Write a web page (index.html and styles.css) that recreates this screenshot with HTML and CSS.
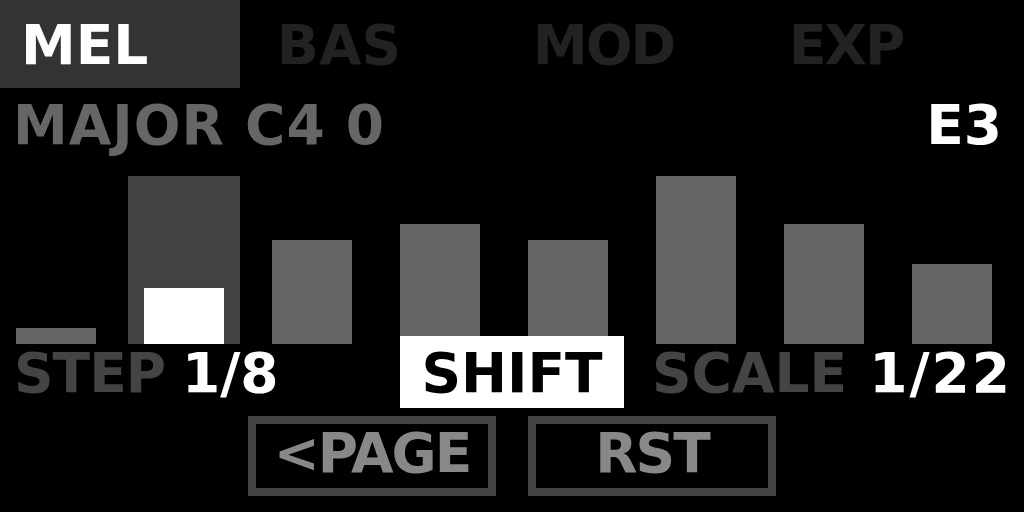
FILE: index.html
```html
<!DOCTYPE html>
<html lang="en">
<head>
    <meta charset="UTF-8">
    <meta name="viewport" content="width=device-width, initial-scale=1.0">
    <title>Sequencer - MEL</title>
    <link rel="stylesheet" href="styles.css">
</head>
<body>
    <div class="screen">
        <div class="tabs">
            <div class="tab active">MEL</div>
            <div class="tab">BAS</div>
            <div class="tab tight">MOD</div>
            <div class="tab tight">EXP</div>
        </div>

        <div class="info">
            <span class="scale-name">MAJOR C4 0</span>
            <span class="note">E3</span>
        </div>

        <div class="bars">
            <div class="slot"><div class="bar" style="height: 16px"></div></div>
            <div class="slot selected">
                <div class="frame"><div class="bar" style="height: 56px"></div></div>
            </div>
            <div class="slot"><div class="bar" style="height: 104px"></div></div>
            <div class="slot"><div class="bar" style="height: 120px"></div></div>
            <div class="slot"><div class="bar" style="height: 104px"></div></div>
            <div class="slot"><div class="bar" style="height: 168px"></div></div>
            <div class="slot"><div class="bar" style="height: 120px"></div></div>
            <div class="slot"><div class="bar" style="height: 80px"></div></div>
        </div>

        <div class="params">
            <div class="param step">
                <span class="label">STEP</span>
                <span class="value">1/8</span>
            </div>
            <div class="shift">SHIFT</div>
            <div class="param scale">
                <span class="label">SCALE</span>
                <span class="value">1/22</span>
            </div>
        </div>

        <div class="buttons">
            <div class="btn page">&lt;PAGE</div>
            <div class="btn rst">RST</div>
        </div>
    </div>
</body>
</html>
```

FILE: styles.css
```css
* {
    margin: 0;
    padding: 0;
    box-sizing: border-box;
}

body {
    background: #000;
}

.screen {
    width: 1024px;
    height: 512px;
    overflow: hidden;
    background: #000;
    font-family: 'DejaVu Sans', 'Liberation Sans', sans-serif;
    font-weight: bold;
    font-size: 55px;
    line-height: 40px;
    white-space: nowrap;
}

/* top tab strip */
.tabs {
    display: flex;
    height: 88px;
}

.tab {
    width: 240px;
    margin-right: 16px;
    padding: 25px 0 0 21px;
    color: #222;
}

.tab.active {
    background: #333;
    color: #fff;
}

.tab.tight { letter-spacing: -2px; }

/* scale + current note */
.info {
    display: flex;
    justify-content: space-between;
    height: 40px;
    margin-top: 17px;
    padding: 0 22px 0 13px;
}

.scale-name {
    color: #666;
    letter-spacing: 1px;
}

.note {
    color: #fff;
}

/* step bars */
.bars {
    display: flex;
    align-items: flex-end;
    height: 199px;
}

.slot {
    width: 128px;
}

.bar {
    width: 80px;
    margin-left: 16px;
    background: #666;
}

.slot.selected .frame {
    display: flex;
    align-items: flex-end;
    width: 112px;
    height: 168px;
    padding: 0 16px;
    background: #444;
}

.slot.selected .bar {
    margin-left: 0;
    background: #fff;
}

/* parameter row */
.params {
    display: flex;
    height: 72px;
    margin-top: -8px;
}

.param {
    display: flex;
    padding-top: 17px;
}

.param .label {
    color: #444;
}

.param .value {
    color: #fff;
}

.step {
    width: 400px;
    padding-left: 14px;
    gap: 17px;
}

.step .label { letter-spacing: -1px; }

.shift {
    position: relative;
    width: 224px;
    padding-top: 17px;
    background: #fff;
    color: #000;
    text-align: center;
}

.scale {
    flex: 1;
    padding-left: 28px;
    gap: 22px;
}

.scale .value { letter-spacing: 2px; }

/* soft buttons */
.buttons {
    display: flex;
    justify-content: center;
    gap: 32px;
    margin-top: 8px;
}

.btn {
    width: 248px;
    height: 80px;
    padding-top: 9px;
    border: 8px solid #444;
    color: #888;
    text-align: center;
}

.page,
.rst {
    letter-spacing: -2px;
}
```
